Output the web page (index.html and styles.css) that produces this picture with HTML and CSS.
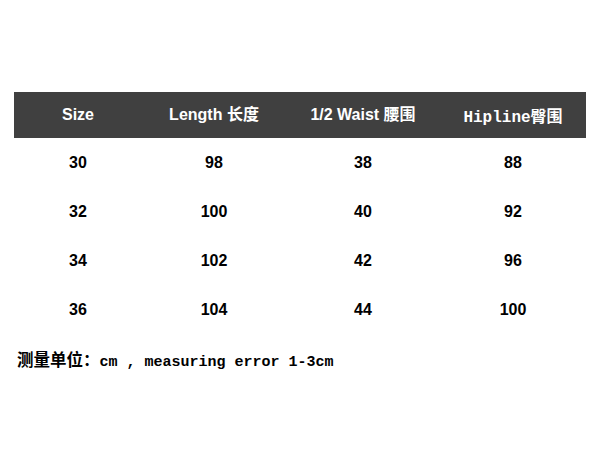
FILE: index.html
```html
<!DOCTYPE html>
<html>
<head>
<meta charset="utf-8">
<link rel="stylesheet" href="styles.css">
</head>
<body>
<div class="page">
  <div class="table">
    <div class="row head">
      <div class="cell">Size</div>
      <div class="cell">Length 长度</div>
      <div class="cell">1/2 Waist 腰围</div>
      <div class="cell mono">Hipline<span class="cjk">臀围</span></div>
    </div>
    <div class="row">
      <div class="cell">30</div><div class="cell">98</div><div class="cell">38</div><div class="cell">88</div>
    </div>
    <div class="row">
      <div class="cell">32</div><div class="cell">100</div><div class="cell">40</div><div class="cell">92</div>
    </div>
    <div class="row">
      <div class="cell">34</div><div class="cell">102</div><div class="cell">42</div><div class="cell">96</div>
    </div>
    <div class="row">
      <div class="cell">36</div><div class="cell">104</div><div class="cell">44</div><div class="cell">100</div>
    </div>
  </div>
  <p class="note"><span class="cjk">测量单位：</span>cm , measuring error 1-3cm</p>
</div>
</body>
</html>
```
FILE: styles.css
```css
html, body {
  margin: 0;
  padding: 0;
  background: #ffffff;
}
.page {
  padding: 92px 10px 0 14px;
}
.table {
  width: 572px;
  font-family: "Liberation Sans", Arial, "Noto Sans CJK SC", sans-serif;
  font-weight: bold;
}
.row {
  display: grid;
  grid-template-columns: 128px 144px 154px 146px;
  height: 49px;
  align-items: center;
  color: #000000;
  font-size: 16px;
}
.row.head {
  height: 46px;
  background: #404040;
  color: #ffffff;
  font-size: 16px;
}
.cell {
  text-align: center;
  line-height: 20px;
  height: 20px;
}
.mono {
  font-family: "Liberation Mono", "Noto Sans CJK SC", monospace;
  font-size: 16px;
}
.cjk {
  font-family: "Noto Sans CJK SC", sans-serif;
  font-size: 16px;
}
.note {
  margin: 15px 0 0 3px;
  font-family: "Liberation Mono", "Noto Sans CJK SC", monospace;
  font-weight: bold;
  font-size: 15px;
  line-height: 20px;
  color: #000000;
}
.note .cjk {
  font-size: 16.5px;
}
```
